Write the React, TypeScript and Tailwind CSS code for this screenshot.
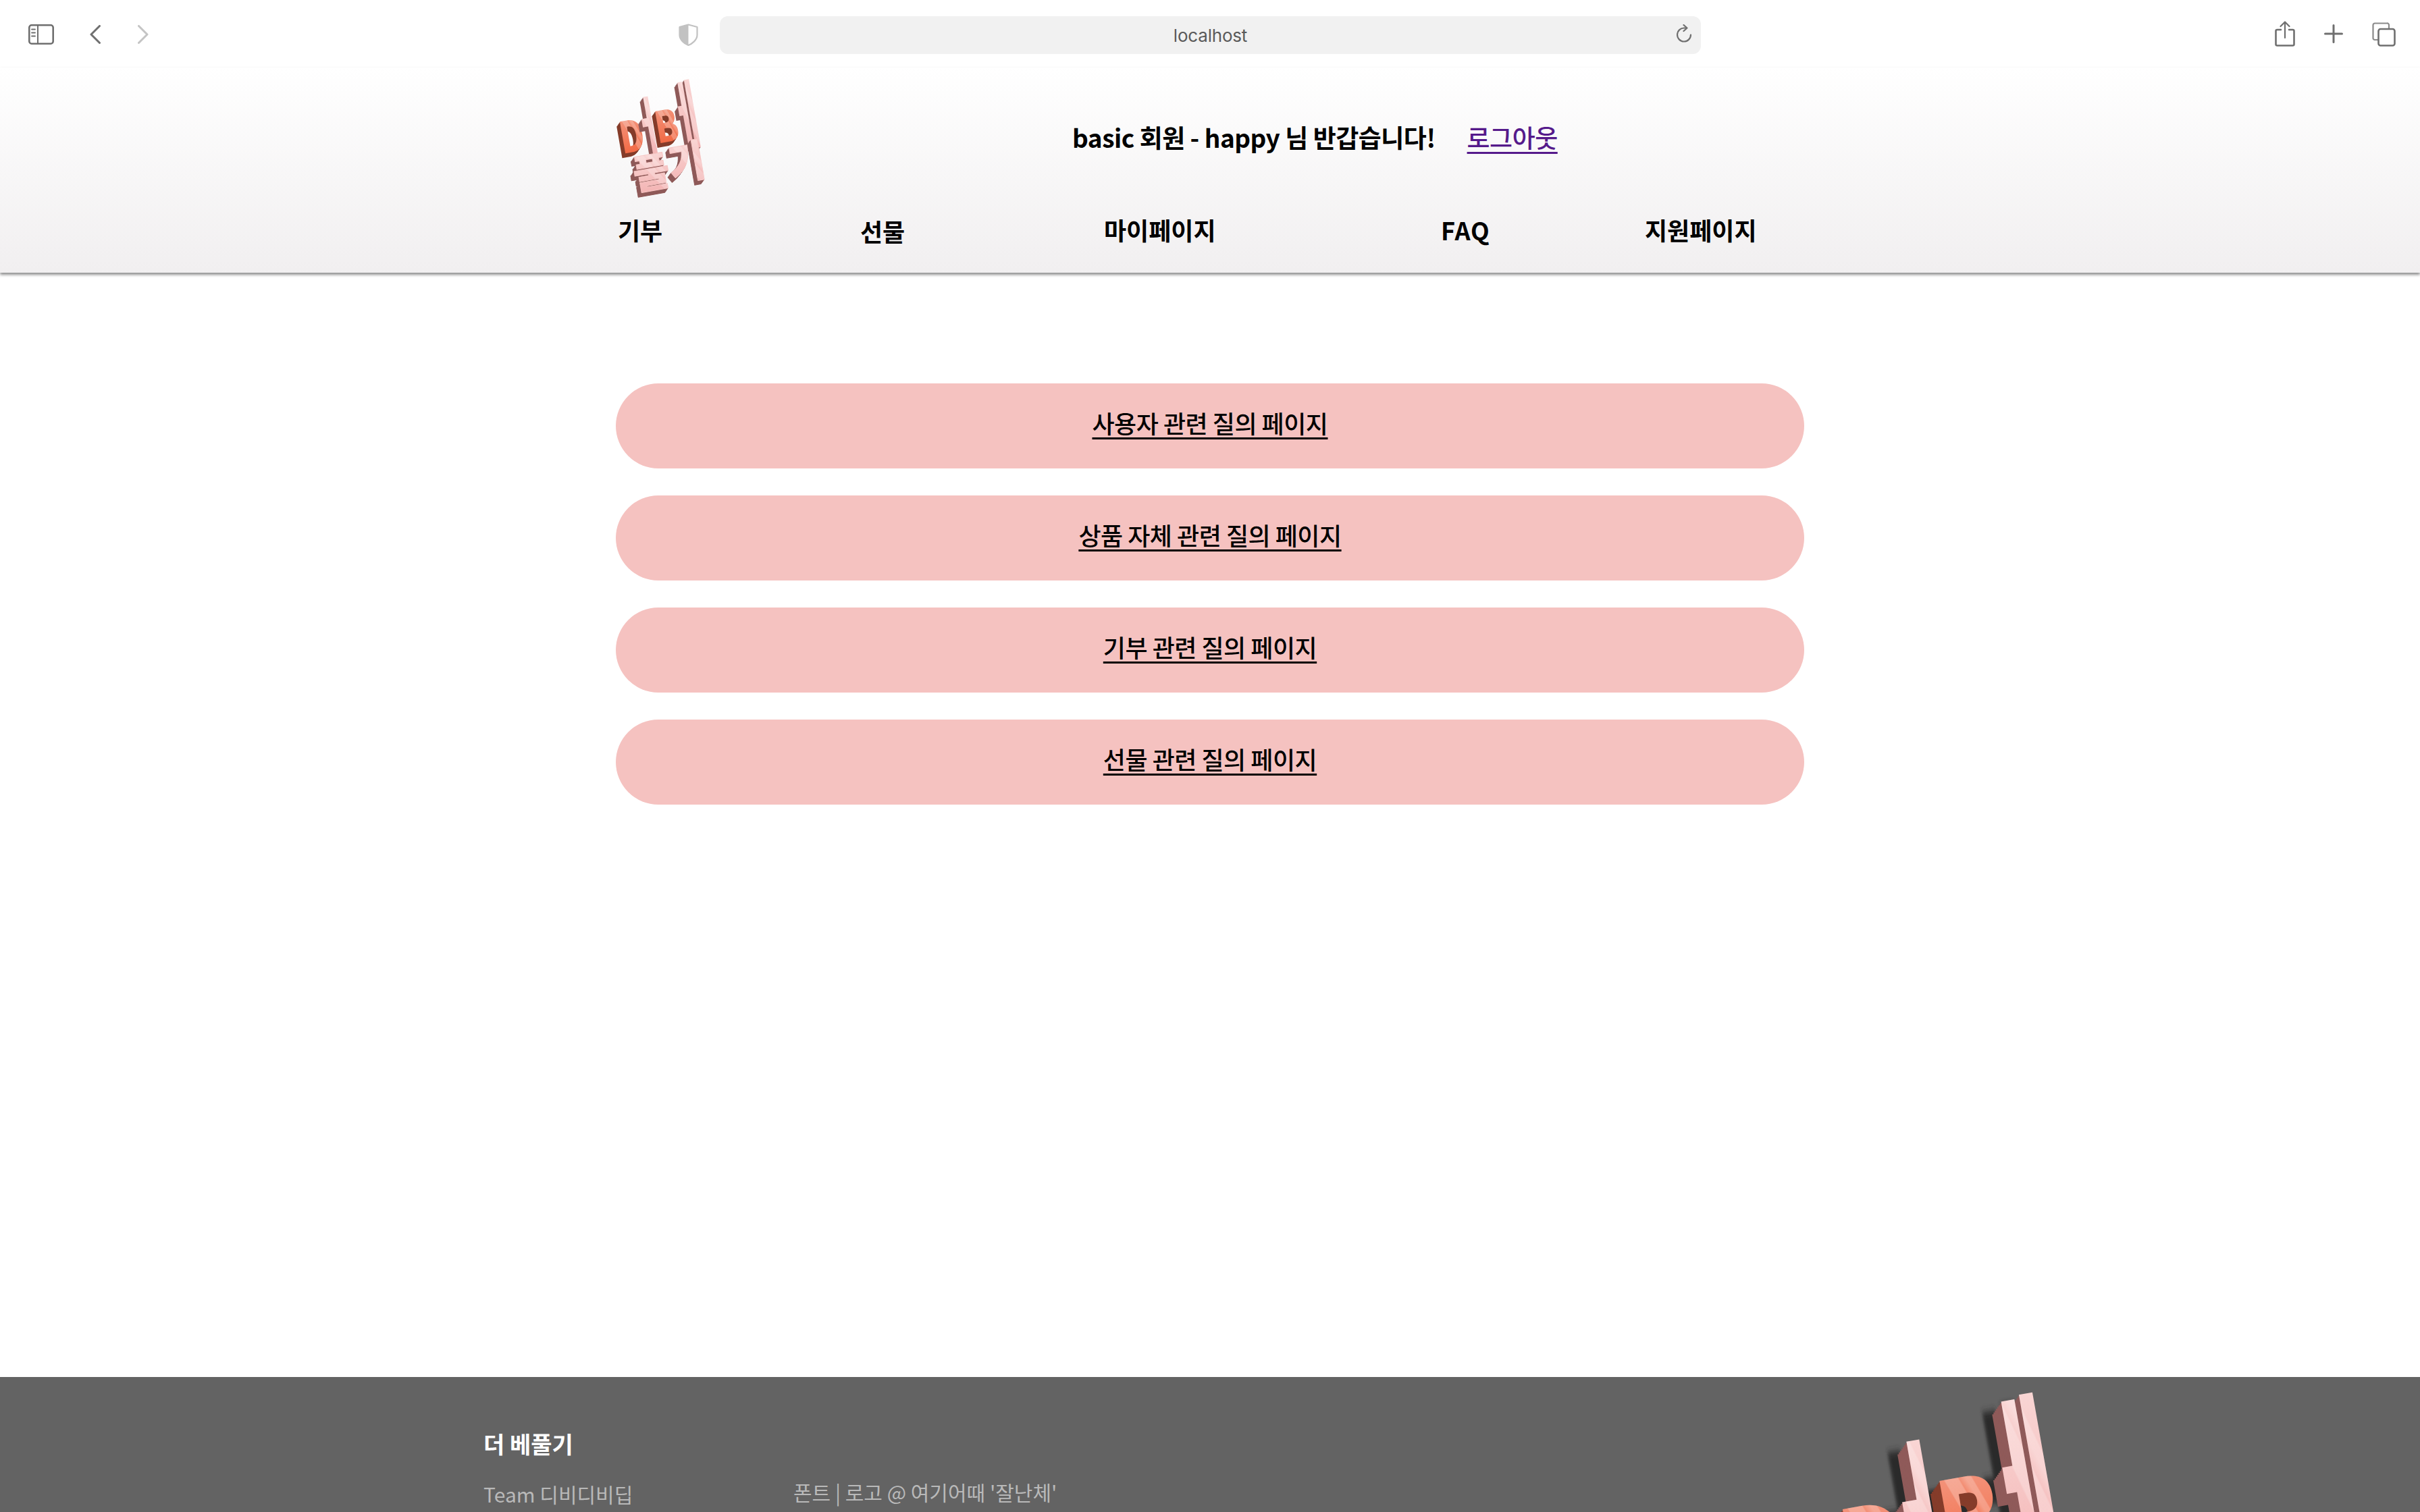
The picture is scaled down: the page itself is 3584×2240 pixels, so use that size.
import React from "react";

const KR = '"Noto Sans CJK KR", "Noto Sans", sans-serif';

type GlyphSpec = { ch: string; x: number; y: number; size: number; sx: number; sy: number; pink: boolean; sw: number };

const GLYPHS: GlyphSpec[] = [
  { ch: "D", x: 40, y: 96, size: 64, sx: 0.78, sy: 1.0, pink: false, sw: 0 },
  { ch: "ㅓ", x: 64, y: 98, size: 70, sx: 0.62, sy: 1.35, pink: true, sw: 0 },
  { ch: "B", x: 94, y: 90, size: 64, sx: 0.78, sy: 1.0, pink: false, sw: 0 },
  { ch: "ㅔ", x: 122, y: 96, size: 78, sx: 0.62, sy: 1.4, pink: true, sw: 0 },
  { ch: "풀", x: 50, y: 152, size: 62, sx: 0.95, sy: 0.95, pink: true, sw: 1 },
  { ch: "기", x: 104, y: 148, size: 62, sx: 0.95, sy: 1.05, pink: true, sw: 1 },
];

function Logo({ id, className, shadow }: { id: string; className: string; shadow?: boolean }) {
  const depth = [7, 6, 5, 4, 3, 2, 1];
  return (
    <svg viewBox="44 20 138 137" className={className} overflow="visible" aria-label="더베풀기 logo">
      <defs>
        <linearGradient id={`${id}o`} x1="0" y1="0" x2="0" y2="1">
          <stop offset="0" stopColor="#f4a896" />
          <stop offset="1" stopColor="#f15a30" />
        </linearGradient>
        <linearGradient id={`${id}p`} x1="0" y1="0" x2="0" y2="1">
          <stop offset="0" stopColor="#fbe0de" />
          <stop offset="1" stopColor="#f2aeae" />
        </linearGradient>
        <linearGradient id={`${id}g`} x1="0" y1="1" x2="1" y2="0">
          <stop offset="0.45" stopColor="#ffffff" stopOpacity="0" />
          <stop offset="0.46" stopColor="#ffffff" stopOpacity="0.22" />
          <stop offset="0.56" stopColor="#ffffff" stopOpacity="0.22" />
          <stop offset="0.57" stopColor="#ffffff" stopOpacity="0" />
          <stop offset="0.62" stopColor="#ffffff" stopOpacity="0.22" />
          <stop offset="0.66" stopColor="#ffffff" stopOpacity="0.22" />
          <stop offset="0.67" stopColor="#ffffff" stopOpacity="0" />
        </linearGradient>
        <filter id={`${id}b`} x="-30%" y="-30%" width="160%" height="160%">
          <feGaussianBlur stdDeviation="1.4" />
        </filter>
      </defs>
      <g transform="rotate(-10 110 90)" fontFamily={KR} fontWeight={900}>
        {shadow &&
          GLYPHS.map((g) => (
            <text
              key={`s${g.ch}`}
              transform={`translate(${g.x - 11} ${g.y + 4}) scale(${g.sx} ${g.sy})`}
              fontSize={g.size}
              fill="#2b2b2b"
              filter={`url(#${id}b)`}
            >
              {g.ch}
            </text>
          ))}
        {GLYPHS.map((g) => (
          <g key={g.ch}>
            {depth.map((d) => (
              <text
                key={d}
                transform={`translate(${g.x - d * 0.85} ${g.y + d * 0.85}) scale(${g.sx} ${g.sy})`}
                fontSize={g.size}
                fill={g.pink ? "#8f5a59" : "#853c2a"}
                stroke={g.pink ? "#8f5a59" : "#853c2a"}
                strokeWidth={g.sw}
                strokeLinejoin="round"
              >
                {g.ch}
              </text>
            ))}
            <text
              transform={`translate(${g.x} ${g.y}) scale(${g.sx} ${g.sy})`}
              fontSize={g.size}
              fill={g.pink ? `url(#${id}p)` : `url(#${id}o)`}
              stroke={g.pink ? "#f6c4c2" : "none"}
              strokeWidth={g.sw}
              strokeLinejoin="round"
            >
              {g.ch}
            </text>
            <text
              transform={`translate(${g.x} ${g.y}) scale(${g.sx} ${g.sy})`}
              fontSize={g.size}
              fill={`url(#${id}g)`}
            >
              {g.ch}
            </text>
          </g>
        ))}
      </g>
    </svg>
  );
}

const S = { fill: "none", stroke: "#6f6f6f", strokeWidth: 2.6, strokeLinecap: "round" as const, strokeLinejoin: "round" as const };

function Toolbar() {
  return (
    <div className="relative z-10 flex h-[100px] items-start bg-white">
      <svg width="38" height="30" viewBox="0 0 38 30" className="ml-[42px] mt-[36px] shrink-0">
        <rect x="1.3" y="1.3" width="35.4" height="27.4" rx="3.5" {...S} />
        <path d="M14 1.5V28.5" {...S} strokeWidth={2} />
        <path d="M5 7.5H10M5 12.5H10M5 17.5H10" {...S} strokeWidth={1.8} />
      </svg>
      <svg width="16" height="28" viewBox="0 0 16 28" className="ml-[53px] mt-[37px] shrink-0">
        <path d="M14.5 1.5L2 14L14.5 26.5" {...S} strokeWidth={3} />
      </svg>
      <svg width="16" height="28" viewBox="0 0 16 28" className="ml-[55px] mt-[37px] shrink-0">
        <path d="M1.5 1.5L14 14L1.5 26.5" {...S} stroke="#c4c4c4" strokeWidth={3} />
      </svg>
      <svg width="29" height="33" viewBox="0 0 29 33" className="ml-[785px] mt-[35px] shrink-0">
        <path d="M14.5 1.5L27.5 5V17C27.5 24 20 30 14.5 32C9 30 1.5 24 1.5 17V5Z" fill="#fff" stroke="#c2c2c2" strokeWidth="2.2" strokeLinejoin="round" />
        <path d="M14.5 1.5L1.5 5V17C1.5 24 9 30 14.5 32Z" fill="#c2c2c2" />
      </svg>
      <div
        className="relative ml-[32px] mt-[24px] flex h-[56px] w-[1453px] shrink-0 items-center justify-center rounded-[12px] bg-[#f1f1f1] text-[26px] text-[#5a5a5a]"
        style={{ fontFamily: 'Inter, "Liberation Sans", sans-serif' }}
      >
        <span className="tracking-[-0.2px]">localhost</span>
        <svg width="23" height="27" viewBox="0 0 23 27" className="absolute right-[13px] top-[12px]">
          <path d="M21 15.5A10 10 0 1 1 11.5 5.5H14" {...S} strokeWidth={2.2} />
          <path d="M10.5 1L15.5 5.5L10.5 10" {...S} strokeWidth={2.2} />
        </svg>
      </div>
      <svg width="30" height="38" viewBox="0 0 30 38" className="ml-[850px] mt-[31px] shrink-0">
        <path d="M9 13H3.5A2 2 0 0 0 1.5 15V34.5A2 2 0 0 0 3.5 36.5H26.5A2 2 0 0 0 28.5 34.5V15A2 2 0 0 0 26.5 13H21" {...S} />
        <path d="M15 25V2M8.5 8L15 1.5L21.5 8" {...S} strokeWidth={2.2} />
      </svg>
      <svg width="28" height="28" viewBox="0 0 28 28" className="ml-[43px] mt-[36px] shrink-0">
        <path d="M14 1.5V26.5M1.5 14H26.5" {...S} strokeWidth={3} />
      </svg>
      <svg width="35" height="36" viewBox="0 0 35 36" className="ml-[43px] mt-[33px] shrink-0">
        <path d="M8.5 26H4A2.5 2.5 0 0 1 1.5 23.5V4A2.5 2.5 0 0 1 4 1.5H22A2.5 2.5 0 0 1 25 4V9" {...S} stroke="#8a8a8a" strokeWidth={2.2} />
        <rect x="9.5" y="10" width="24" height="24.5" rx="3" {...S} />
      </svg>
    </div>
  );
}

const NAV = [
  { t: "기부", w: "w-[359px]", cls: "" },
  { t: "선물", w: "w-[361px]", cls: "mt-[2px]" },
  { t: "마이페이지", w: "w-[499px]", cls: "" },
  { t: "FAQ", w: "w-[302px]", cls: "tracking-[1px]" },
  { t: "지원페이지", w: "w-[240px]", cls: "" },
];

function Header() {
  return (
    <header className="relative z-10 h-[304px] bg-gradient-to-b from-white to-[#f1eff0] pl-[915px] shadow-[0_3px_4px_rgba(0,0,0,0.45)]">
      <div className="flex items-start pt-[40px]">
        <Logo id="h" className="ml-[9px] h-[137px] w-[138px] shrink-0" />
        <div className="ml-[526px] mt-[36px] flex items-center text-[37px] font-bold leading-[54px] text-black tracking-[-0.5px]">
          <span>basic 회원 - happy 님 반갑습니다!</span>
          <a href="#" className="ml-[47px] font-medium text-[#551a8b] underline decoration-[3px] underline-offset-[6px]">
            로그아웃
          </a>
        </div>
      </div>
      <nav className="mt-[37px] flex items-start text-[36px] font-bold leading-[52px] text-black">
        {NAV.map((n) => (
          <div key={n.t} className={`${n.w} shrink-0 ${n.cls}`}>
            {n.t}
          </div>
        ))}
      </nav>
    </header>
  );
}

const LINKS = ["사용자 관련 질의 페이지", "상품 자체 관련 질의 페이지", "기부 관련 질의 페이지", "선물 관련 질의 페이지"];

function Footer() {
  return (
    <footer className="mt-auto flex h-[200px] overflow-hidden bg-[#636363] pl-[716px]">
      <div className="w-[459px] shrink-0">
        <div className="mt-[74px] text-[34px] font-bold leading-[50px] text-white">더 베풀기</div>
        <div className="mt-[27px] text-[30px] leading-[44px] text-[#b9b9b9]">Team 디비디비딥</div>
      </div>
      <div className="w-[1570px] shrink-0">
        <div className="mt-[148px] text-[30px] leading-[44px] text-[#b9b9b9]">폰트 | 로고 @ 여기어때 '잘난체'</div>
      </div>
      <div className="mt-[85px] shrink-0">
        <Logo id="f" shadow className="h-[377px] w-[380px]" />
      </div>
    </footer>
  );
}

export default function App() {
  return (
    <div className="flex h-[2240px] flex-col overflow-hidden bg-white" style={{ fontFamily: KR }}>
      <Toolbar />
      <Header />
      <main className="flex flex-col items-center gap-[40px] pt-[164px]">
        {LINKS.map((t) => (
          <div key={t} className="flex h-[126px] w-[1760px] items-start justify-center rounded-[63px] bg-[#f5c2c0] pt-[32px]">
            <a href="#" className="text-[36px] font-medium leading-[52px] text-black underline decoration-[3px] underline-offset-[6px] tracking-[-0.5px]">
              {t}
            </a>
          </div>
        ))}
      </main>
      <Footer />
    </div>
  );
}
